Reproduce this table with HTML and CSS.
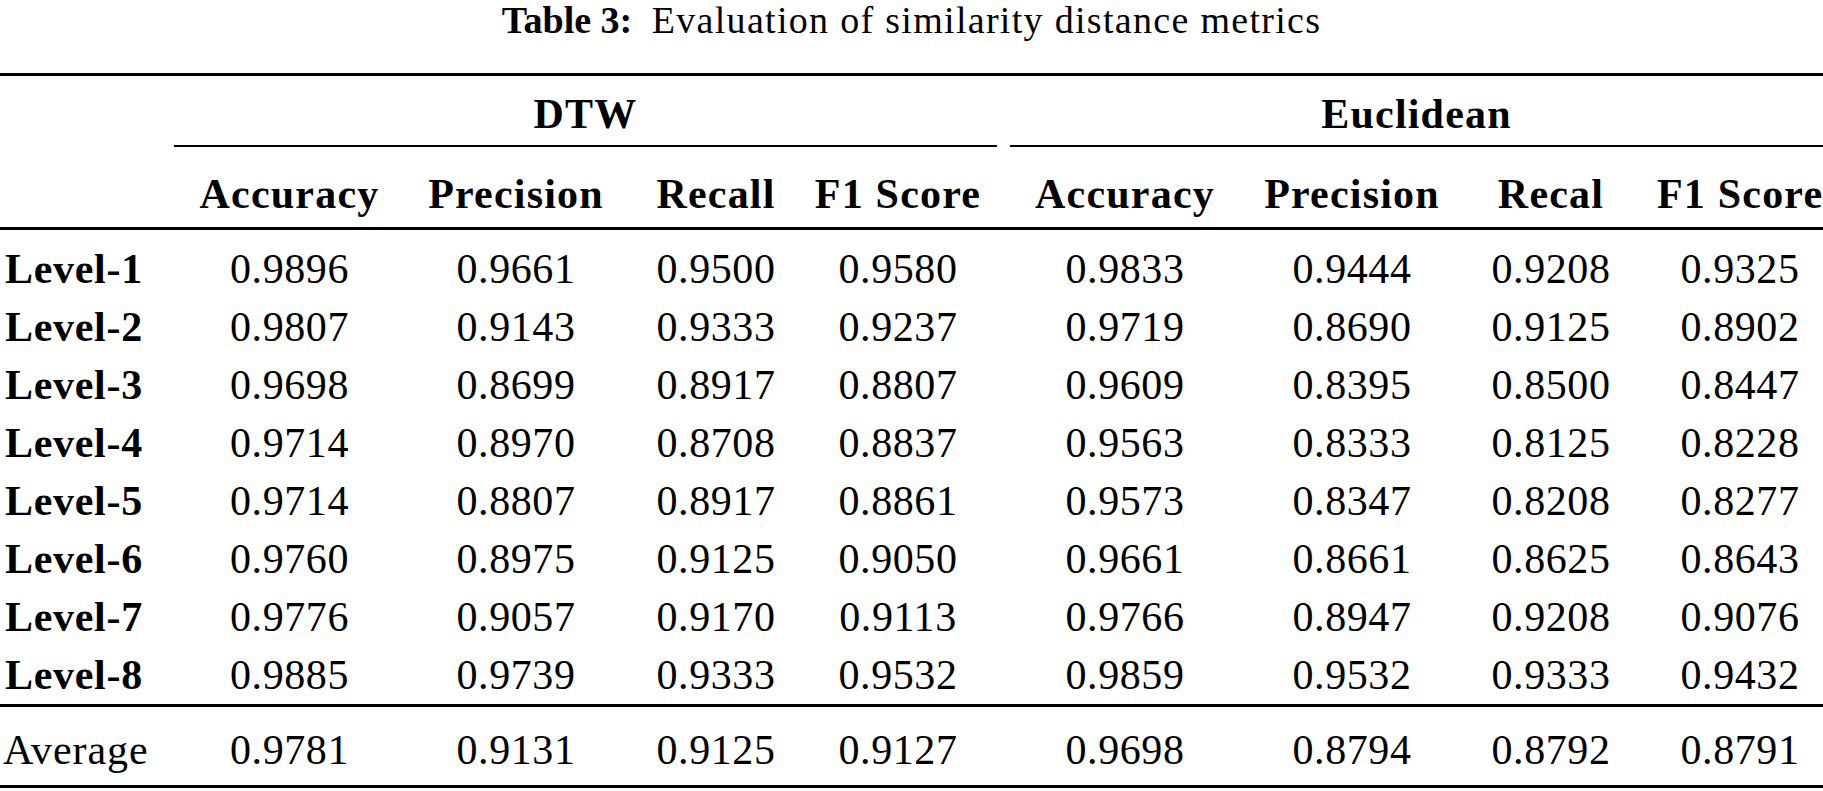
FILE: index.html
```html
<!DOCTYPE html>
<html lang="en">
<head>
<meta charset="utf-8">
<title>Table 3: Evaluation of similarity distance metrics</title>
<link rel="stylesheet" href="styles.css">
</head>
<body>
<div class="page">
  <div class="caption"><span class="cap-label">Table 3:</span> <span class="cap-text">Evaluation of similarity distance metrics</span></div>
  <table class="results">
    <colgroup>
      <col class="w-label">
      <col class="w-d1"><col class="w-d2"><col class="w-d3"><col class="w-d4">
      <col class="w-e1"><col class="w-e2"><col class="w-e3"><col class="w-e4">
    </colgroup>
    <thead>
      <tr class="group-row">
        <th></th>
        <th colspan="4"><div class="group group-dtw">DTW</div></th>
        <th colspan="4"><div class="group group-euc">Euclidean</div></th>
      </tr>
      <tr class="metric-row">
        <th></th>
        <th>Accuracy</th><th>Precision</th><th>Recall</th><th>F1 Score</th>
        <th>Accuracy</th><th>Precision</th><th>Recal</th><th>F1 Score</th>
      </tr>
    </thead>
    <tbody>
      <tr><th class="label">Level-1</th><td>0.9896</td><td>0.9661</td><td>0.9500</td><td>0.9580</td><td>0.9833</td><td>0.9444</td><td>0.9208</td><td>0.9325</td></tr>
      <tr><th class="label">Level-2</th><td>0.9807</td><td>0.9143</td><td>0.9333</td><td>0.9237</td><td>0.9719</td><td>0.8690</td><td>0.9125</td><td>0.8902</td></tr>
      <tr><th class="label">Level-3</th><td>0.9698</td><td>0.8699</td><td>0.8917</td><td>0.8807</td><td>0.9609</td><td>0.8395</td><td>0.8500</td><td>0.8447</td></tr>
      <tr><th class="label">Level-4</th><td>0.9714</td><td>0.8970</td><td>0.8708</td><td>0.8837</td><td>0.9563</td><td>0.8333</td><td>0.8125</td><td>0.8228</td></tr>
      <tr><th class="label">Level-5</th><td>0.9714</td><td>0.8807</td><td>0.8917</td><td>0.8861</td><td>0.9573</td><td>0.8347</td><td>0.8208</td><td>0.8277</td></tr>
      <tr><th class="label">Level-6</th><td>0.9760</td><td>0.8975</td><td>0.9125</td><td>0.9050</td><td>0.9661</td><td>0.8661</td><td>0.8625</td><td>0.8643</td></tr>
      <tr><th class="label">Level-7</th><td>0.9776</td><td>0.9057</td><td>0.9170</td><td>0.9113</td><td>0.9766</td><td>0.8947</td><td>0.9208</td><td>0.9076</td></tr>
      <tr><th class="label">Level-8</th><td>0.9885</td><td>0.9739</td><td>0.9333</td><td>0.9532</td><td>0.9859</td><td>0.9532</td><td>0.9333</td><td>0.9432</td></tr>
    </tbody>
    <tfoot>
      <tr><th class="label label-plain">Average</th><td>0.9781</td><td>0.9131</td><td>0.9125</td><td>0.9127</td><td>0.9698</td><td>0.8794</td><td>0.8792</td><td>0.8791</td></tr>
    </tfoot>
  </table>
</div>
</body>
</html>
```

FILE: styles.css
```css
html, body {
  margin: 0;
  padding: 0;
  background: #ffffff;
}

body {
  color: #000000;
  font-family: "Liberation Serif", "Times New Roman", serif;
}

.page {
  width: 1823px;
}

.caption {
  text-align: center;
  font-size: 38px;
  line-height: 40px;
  height: 40px;
  margin-bottom: 33px;
  white-space: nowrap;
}

.cap-label {
  font-weight: bold;
  margin-right: 10px;
}

.cap-text {
  letter-spacing: 1.3px;
}

.results {
  width: 1823px;
  table-layout: fixed;
  border-collapse: separate;
  border-spacing: 0;
  font-size: 42px;
  border-top: 3px solid #000;
  border-bottom: 3px solid #000;
}

.w-label { width: 174px; }
.w-d1 { width: 231px; }
.w-d2 { width: 222px; }
.w-d3 { width: 178px; }
.w-d4 { width: 199px; }
.w-e1 { width: 242px; }
.w-e2 { width: 212px; }
.w-e3 { width: 186px; }
.w-e4 { width: 179px; }

.results th,
.results td {
  padding: 0;
  text-align: center;
  line-height: 58px;
  white-space: nowrap;
}

.results th {
  letter-spacing: 1.2px;
}

.results td {
  font-weight: normal;
  letter-spacing: 0.6px;
}

/* nudge the two "F1 Score" columns so their centres match the reference */
.results tr > :nth-child(5) {
  padding-right: 13px;
}

.results tr > :nth-child(9) {
  padding-left: 13px;
}

.results .group-row th {
  padding: 15px 0 0 0;
  line-height: 46px;
  font-weight: bold;
}

.group {
  border-bottom: 2px solid #000;
  padding-bottom: 8px;
}

.group-dtw {
  margin-right: 7px;
}

.group-euc {
  margin-left: 6px;
}

.results .metric-row th {
  font-weight: bold;
  line-height: 46px;
  padding-top: 24px;
  padding-bottom: 10px;
  border-bottom: 3px solid #000;
}

.results tbody tr:first-child th,
.results tbody tr:first-child td {
  padding-top: 10px;
}

.results tbody tr:last-child th,
.results tbody tr:last-child td {
  border-bottom: 3px solid #000;
}

.results tfoot th,
.results tfoot td {
  padding-top: 14px;
  padding-bottom: 6px;
}

.results .label {
  text-align: left;
  padding-left: 5px;
  font-weight: bold;
  letter-spacing: 0.7px;
}

.results .label-plain {
  padding-left: 3px;
  font-weight: normal;
  letter-spacing: 0.9px;
}
```
